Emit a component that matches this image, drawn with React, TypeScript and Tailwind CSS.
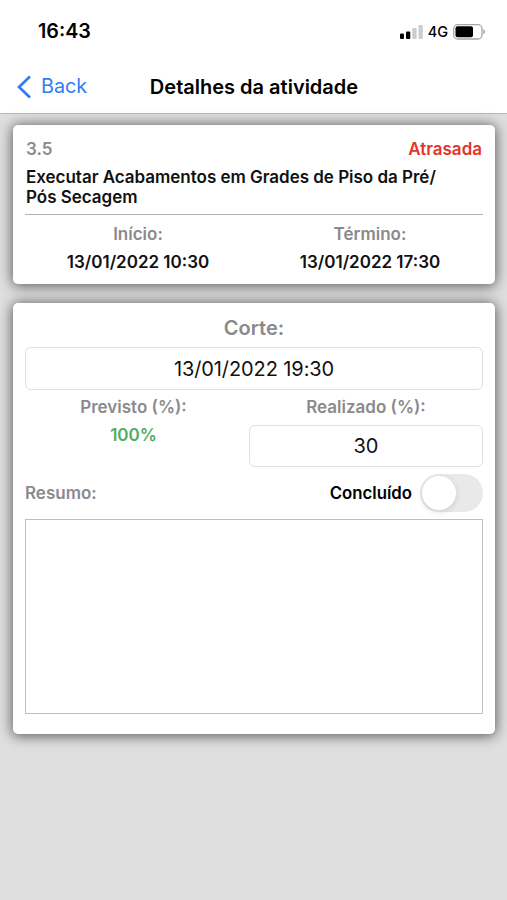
import type React from "react";

interface InfoProps {
  label: string;
  value: string;
}

function DateInfo({ label, value }: InfoProps) {
  return (
    <div className="flex w-[226px] flex-col items-center">
      <span className="text-[17px] leading-5 font-semibold text-[#8a8a8c]">
        {label}
      </span>
      <span className="mt-2 text-[17px] leading-5 font-semibold whitespace-nowrap text-[#111]">
        {value}
      </span>
    </div>
  );
}

function Card({ className, children }: { className: string; children: React.ReactNode }) {
  return (
    <section
      className={`rounded-[5px] bg-white px-3 shadow-[0_1px_13px_1px_rgba(0,0,0,0.6)] ${className}`}
    >
      {children}
    </section>
  );
}

function StatusBar() {
  return (
    <div className="flex h-[60px] items-center justify-between pt-[3px] pr-[21px] pl-[38px]">
      <span className="pt-px text-[19.7px] font-semibold">16:43</span>
      <div className="flex items-center">
        <svg width="23" height="14" viewBox="0 0 23 14">
          <rect x="0" y="8.5" width="4" height="5.5" rx="1" />
          <rect x="6" y="6.5" width="4.3" height="7.5" rx="1" />
          <rect x="12.3" y="3" width="4.3" height="11" rx="1" fill="#ccc" />
          <rect x="18.5" y="0" width="4.3" height="14" rx="1" fill="#ccc" />
        </svg>
        <span className="ml-[5px] text-[14.5px] font-medium">4G</span>
        <svg className="ml-[5px]" width="33" height="16" viewBox="0 0 33 16">
          <rect x="0.7" y="0.7" width="28.3" height="14.3" rx="4" fill="none" stroke="#a6a6a6" strokeWidth="1.3" />
          <rect x="2.5" y="2.3" width="17.5" height="11" rx="2" />
          <path d="M30.3 5v5.5c2.2-1 2.2-4.5 0-5.5" fill="#a6a6a6" />
        </svg>
      </div>
    </div>
  );
}

export default function App() {
  return (
    <div className="flex h-[900px] w-[507px] flex-col bg-[#dfdfdf] font-['Inter',sans-serif] text-black">
      <header className="h-[114px] border-b border-[#b8b8b8] bg-white">
        <StatusBar />
        <div className="grid h-[53px] grid-cols-[141px_1fr_140px] items-center">
          <button className="flex items-center gap-[9px] pl-4 text-[19.8px] text-[#2f7cf6]">
            <svg width="16" height="24" viewBox="0 0 16 24" fill="none" stroke="currentColor" strokeWidth="2.7">
              <path d="M14 1.5 3 12l11 10.5" />
            </svg>
            <span className="pt-px">Back</span>
          </button>
          <h1 className="text-center text-[20px] font-semibold whitespace-nowrap">
            Detalhes da atividade
          </h1>
        </div>
      </header>

      <main className="flex flex-col gap-[19px] pt-[11px] pr-3 pl-[13px]">
        <Card className="h-[159px] pt-[13px]">
          <div className="flex justify-between pr-px pl-px text-[17px] leading-[22px] font-semibold">
            <span className="text-[#8a8a8c]">3.5</span>
            <span className="text-[#e5342a]">Atrasada</span>
          </div>
          <h2 className="mt-[7px] pl-px text-[17px] leading-5 font-semibold tracking-[-0.02px] text-[#111]">
            Executar Acabamentos em Grades de Piso da Pré/
            <br />
            Pós Secagem
          </h2>
          <div className="mt-[7px] flex justify-between border-t border-[#b4b4b4] pt-[9px]">
            <DateInfo label="Início:" value="13/01/2022 10:30" />
            <DateInfo label="Término:" value="13/01/2022 17:30" />
          </div>
        </Card>

        <Card className="h-[431px] pt-3">
          <div className="text-center text-[20px] leading-[26px] font-semibold text-[#8a8a8c]">
            Corte:
          </div>
          <div className="mt-[6px] flex h-[43px] items-center justify-center rounded-[6px] border border-[#e0e0e0] text-[20px] tracking-[-0.1px] text-[#111]">
            13/01/2022 19:30
          </div>
          <div className="mt-[7px] flex justify-between text-[17px] leading-5 font-semibold text-[#8a8a8c]">
            <div className="flex w-[217px] flex-col items-center gap-2">
              <span>Previsto (%):</span>
              <span className="text-[#50ad60]">100%</span>
            </div>
            <div className="flex w-[234px] flex-col items-center gap-2">
              <span>Realizado (%):</span>
              <div className="flex h-[42px] w-full items-center justify-center rounded-[6px] border border-[#e0e0e0] text-[20px] font-normal text-[#111]">
                30
              </div>
            </div>
          </div>
          <div className="mt-[7px] flex h-[38px] items-center justify-between text-[17px] font-semibold">
            <span className="pt-px text-[#8a8a8c]">Resumo:</span>
            <div className="flex items-center gap-2">
              <span className="pt-px text-[16.8px]">Concluído</span>
              <button
                role="switch"
                aria-checked="false"
                aria-label="Concluído"
                className="h-[38px] w-[63px] rounded-full bg-[#e9e9ea] py-[2px] pl-[2px]"
              >
                <span className="block size-[34px] rounded-full bg-white shadow-[0_2px_6px_rgba(0,0,0,0.12)]" />
              </button>
            </div>
          </div>
          <textarea
            aria-label="Resumo"
            className="mt-[7px] block h-[195px] w-full resize-none border border-[#c0c0c0]"
          />
        </Card>
      </main>
    </div>
  );
}
